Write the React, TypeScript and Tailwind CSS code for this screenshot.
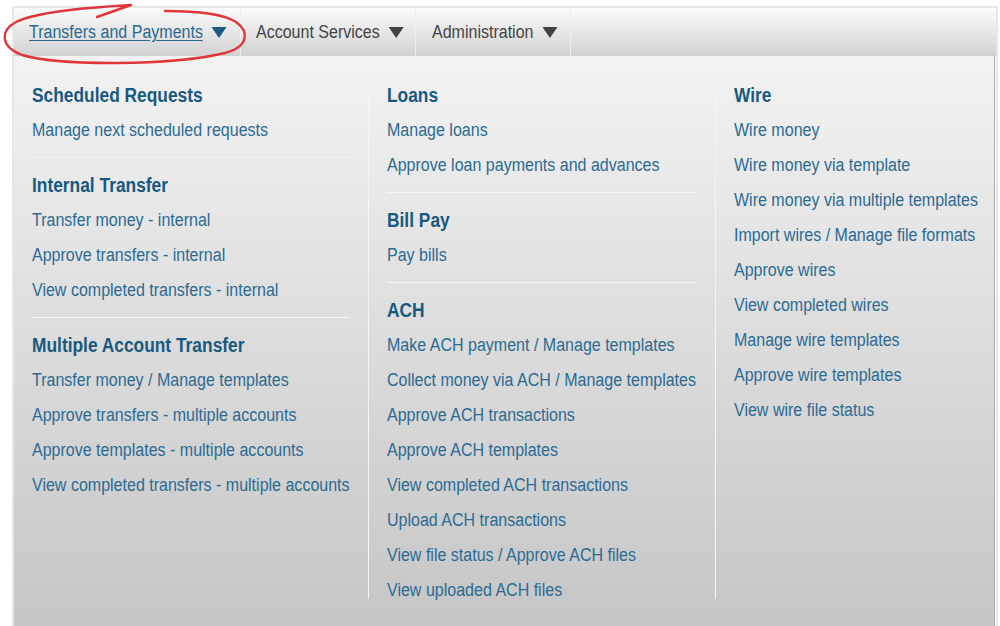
import React from 'react';

type Section = { title: string; links: string[] };

const columns: Section[][] = [
  [
    { title: 'Scheduled Requests', links: ['Manage next scheduled requests'] },
    {
      title: 'Internal Transfer',
      links: ['Transfer money - internal', 'Approve transfers - internal', 'View completed transfers - internal'],
    },
    {
      title: 'Multiple Account Transfer',
      links: [
        'Transfer money / Manage templates',
        'Approve transfers - multiple accounts',
        'Approve templates - multiple accounts',
        'View completed transfers - multiple accounts',
      ],
    },
  ],
  [
    { title: 'Loans', links: ['Manage loans', 'Approve loan payments and advances'] },
    { title: 'Bill Pay', links: ['Pay bills'] },
    {
      title: 'ACH',
      links: [
        'Make ACH payment / Manage templates',
        'Collect money via ACH / Manage templates',
        'Approve ACH transactions',
        'Approve ACH templates',
        'View completed ACH transactions',
        'Upload ACH transactions',
        'View file status / Approve ACH files',
        'View uploaded ACH files',
      ],
    },
  ],
  [
    {
      title: 'Wire',
      links: [
        'Wire money',
        'Wire money via template',
        'Wire money via multiple templates',
        'Import wires / Manage file formats',
        'Approve wires',
        'View completed wires',
        'Manage wire templates',
        'Approve wire templates',
        'View wire file status',
      ],
    },
  ],
];

const tabs = [
  { label: 'Transfers and Payments', active: true, w: 'w-[227px] pl-[15px]' },
  { label: 'Account Services', active: false, w: 'w-[175px] pl-[15px]' },
  { label: 'Administration', active: false, w: 'w-[155px] pl-[16px]' },
];

// the menu font is a condensed sans; squeeze Liberation Sans horizontally
function Narrow({ children, className = '' }: { children: React.ReactNode; className?: string }) {
  return (
    <span className={`inline-flex items-center whitespace-nowrap origin-left scale-x-[0.89] ${className}`}>
      {children}
    </span>
  );
}

function Caret({ active }: { active: boolean }) {
  return (
    <svg width="17" height="11" viewBox="0 0 17 11" className="ml-[10px] shrink-0">
      <polygon points="0,0 17,0 8.5,11" fill={active ? '#1d5b86' : '#424242'} />
    </svg>
  );
}

function Column({ sections, first, width }: { sections: Section[]; first?: boolean; width: string }) {
  return (
    <div className={`${width} ${first ? '' : 'border-l border-[#f4f4f4]'} mt-[6px] pl-[18px] pr-[18px]`}>
      <div className="-mt-[6px] -mb-[9px]">
        {sections.map((s, i) => (
          <div key={s.title}>
            {i > 0 && <div className="mt-[9px] mb-[10px] h-px bg-[#f4f4f4]" />}
            <div className="text-[19.5px] font-bold leading-[35px] text-[#17597f]">
              <Narrow>{s.title}</Narrow>
            </div>
            {s.links.map((l) => (
              <a key={l} href="#" className="block text-[18px] leading-[35px] text-[#2b6b93]">
                <Narrow>{l}</Narrow>
              </a>
            ))}
          </div>
        ))}
      </div>
    </div>
  );
}

export default function App() {
  return (
    <div className="relative h-[626px] overflow-hidden bg-white font-['Liberation_Sans',Arial,sans-serif]">
      <div className="ml-[12px] mt-[6px] w-[986px] border-t-2 border-l-2 border-r-2 border-[#e6e6e2]">
        {/* top menu bar */}
        <nav className="flex h-[48px] bg-linear-to-b from-[#fbfbfb] to-[#d2d2d2]">
          {tabs.map((t) => (
            <div key={t.label} className={`flex items-center border-r border-[#efefef] pt-[1px] text-[18px] ${t.w}`}>
              <Narrow>
                <span className={t.active ? 'text-[#2a6890] underline underline-offset-2' : 'text-[#444]'}>
                  {t.label}
                </span>
                <Caret active={t.active} />
              </Narrow>
            </div>
          ))}
        </nav>

        {/* dropdown panel */}
        <div className="h-[600px] mr-[1px] border-r border-[#a9a9a9] bg-linear-to-b from-[#f3f3f3] to-[#c3c3c3] pt-[22px]">
          <div className="flex">
            <Column sections={columns[0]} first width="w-[354px]" />
            <Column sections={columns[1]} width="w-[347px]" />
            <Column sections={columns[2]} width="flex-1" />
          </div>
        </div>
      </div>

      {/* red marker loop around the open tab */}
      <svg className="pointer-events-none absolute left-0 top-0" width="270" height="72" viewBox="0 0 270 72">
        <path
          d="M97 17 L131 5 C95 7 38 11 16 22 C1 30 -1 46 22 55 C60 66 170 66 225 53 C248 47 250 32 236 22 C222 13 195 11 165 11"
          fill="none"
          stroke="#e0353a"
          strokeWidth="2.4"
          strokeLinecap="round"
          strokeLinejoin="round"
        />
      </svg>
    </div>
  );
}
